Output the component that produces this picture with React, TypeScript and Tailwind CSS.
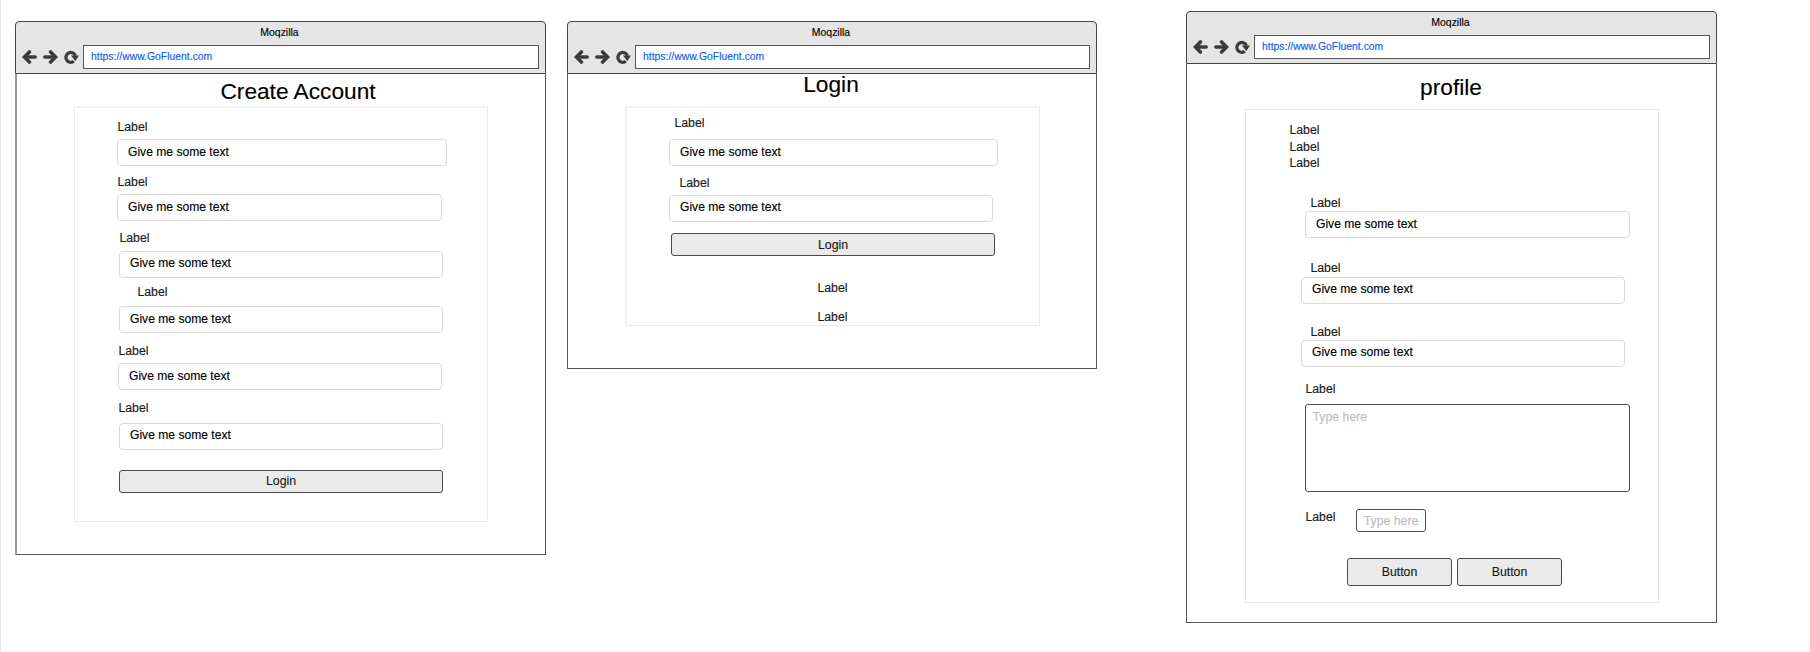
import type { ReactNode } from "react";

function ArrowIcon({ className = "" }: { className?: string }) {
  return (
    <svg viewBox="0 0 15 14" className={`h-[14px] w-[15px] ${className}`} fill="none" stroke="#3b3b3b" strokeWidth="3.5" strokeLinecap="round">
      <path d="M3 7H13.2" />
      <path d="M7.4 1.9L2.4 7l5 5.1" strokeLinejoin="miter" />
    </svg>
  );
}

function ReloadIcon() {
  return (
    <svg viewBox="0 0 15 14" className="h-[14px] w-[15px]">
      <path d="M9.9 11.2A4.9 4.9 0 1 1 11.4 5.6" fill="none" stroke="#3b3b3b" strokeWidth="3.2" />
      <path d="M6.9 5.6L15 5.6L11.4 10.9Z" fill="#3b3b3b" />
    </svg>
  );
}

function BrowserWindow({ className, bodyClass = "border-l", children }: { className: string; bodyClass?: string; children: ReactNode }) {
  return (
    <section className={`flex shrink-0 flex-col ${className}`}>
      <header className="flex h-[53px] shrink-0 flex-col rounded-t-[4px] border border-[#444] bg-[#e5e5e5]">
        <div className="h-[23px] pr-[2px] text-center text-[10.45px] leading-[22px] text-black">Moqzilla</div>
        <div className="flex h-[24px] pl-[6px] pr-[6px]">
          <div className="flex w-[61px] items-center gap-[6px]">
            <ArrowIcon />
            <ArrowIcon className="rotate-180" />
            <ReloadIcon />
          </div>
          <div className="flex-1 border border-[#555] bg-white pl-[7px] text-[10.4px] leading-[21px] text-[#1160e6]">https://www.GoFluent.com</div>
        </div>
      </header>
      <div className={`flex-1 border-r border-b border-[#555] ${bodyClass}`}>{children}</div>
    </section>
  );
}

function Heading({ className = "", children }: { className?: string; children: ReactNode }) {
  return <h1 className={`h-[20px] text-center text-[22.7px] leading-[20px] text-black ${className}`}>{children}</h1>;
}

function Label({ className, children = "Label" }: { className: string; children?: ReactNode }) {
  return <div className={`h-[14px] pl-[0.4px] text-[12.3px] leading-[14px] text-[#1a1a1a] ${className}`}>{children}</div>;
}

function Field({ className, text = "leading-[25px]" }: { className: string; text?: string }) {
  return (
    <div className={`h-[27px] rounded-[4px] border border-[#d9d9d9] pl-[10px] text-[12.1px] text-black ${text} ${className}`}>
      Give me some text
    </div>
  );
}

function Button({ className, children }: { className: string; children: ReactNode }) {
  return (
    <button className={`block rounded-[3px] border border-[#4a4a4a] bg-[#eaeaea] text-center text-[12.3px] text-[#1a1a1a] ${className}`}>
      {children}
    </button>
  );
}

export default function App() {
  return (
    <main className="flex h-[652px] w-[1810px] items-start overflow-hidden border-l border-[#e2e2e2] bg-white font-['Liberation_Sans',Arial,sans-serif] [-webkit-text-stroke:0.15px]">
      <BrowserWindow className="mt-[21px] ml-[14px] h-[534px] w-[531px]" bodyClass="border-l-2 border-l-[#999]">
        <Heading className="mt-[7px] pl-[34px]">Create Account</Heading>
        <div className="mt-[5px] ml-[57px] h-[416px] w-[414px] border border-t-2 border-[#ebebeb] border-t-[#f3f3f3]">
          <Label className="mt-[12px] ml-[42px]" />
          <Field className="mt-[5px] ml-[42px] w-[330px]" />
          <Label className="mt-[9px] ml-[42px]" />
          <Field className="mt-[5px] ml-[42px] w-[325px]" />
          <Label className="mt-[10px] ml-[44px]" />
          <Field className="mt-[6px] ml-[44px] w-[324px]" text="leading-[23px]" />
          <Label className="mt-[7px] ml-[62px]" />
          <Field className="mt-[7px] ml-[44px] w-[324px]" />
          <Label className="mt-[11px] ml-[43px]" />
          <Field className="mt-[5px] ml-[43px] w-[324px]" />
          <Label className="mt-[11px] ml-[43px]" />
          <Field className="mt-[8px] ml-[44px] w-[324px]" text="leading-[23px]" />
          <Button className="mt-[20px] ml-[44px] h-[23px] w-[324px] leading-[21px]">Login</Button>
        </div>
      </BrowserWindow>

      <BrowserWindow className="mt-[21px] ml-[21px] h-[348px] w-[530px]">
        <Heading className="-ml-[2px]">Login</Heading>
        <div className="mt-[12px] ml-[57px] h-[220px] w-[415px] border border-t-2 border-l-2 border-[#ebebeb] border-t-[#f3f3f3] border-l-[#f3f3f3]">
          <Label className="mt-[8px] ml-[47px]" />
          <Field className="mt-[9px] ml-[42px] w-[329px]" />
          <Label className="mt-[10px] ml-[52px]" />
          <Field className="mt-[5px] ml-[42px] w-[324px]" text="leading-[23px]" />
          <Button className="mt-[11px] ml-[44px] h-[23px] w-[324px] leading-[22px]">Login</Button>
          <Label className="mt-[25px] ml-[190px]" />
          <Label className="mt-[15px] ml-[190px]" />
        </div>
      </BrowserWindow>

      <BrowserWindow className="mt-[11px] ml-[89px] h-[612px] w-[531px]">
        <Heading className="mt-[13px] -ml-[1px]">profile</Heading>
        <div className="mt-[12px] ml-[58px] h-[494px] w-[414px] border border-[#e6e6e6]">
          <Label className="mt-[13px] ml-[43px]" />
          <Label className="mt-[3px] ml-[43px]" />
          <Label className="mt-[2px] ml-[43px]" />
          <Label className="mt-[26px] ml-[64px]" />
          <Field className="mt-[1px] ml-[59px] w-[325px]" />
          <Label className="mt-[23px] ml-[64px]" />
          <Field className="mt-[2px] ml-[55px] w-[324px]" text="leading-[23px]" />
          <Label className="mt-[21px] ml-[64px]" />
          <Field className="mt-[1px] ml-[55px] w-[324px]" text="leading-[23px]" />
          <Label className="mt-[15px] ml-[59px]" />
          <div className="mt-[8px] ml-[59px] h-[88px] w-[325px] rounded-[3px] border border-[#4a4a4a] pt-[5px] pl-[6.5px] text-[12.3px] leading-[14px] text-[#bdbdbd]">Type here</div>
          <div className="mt-[17px] ml-[59px] flex h-[23px]">
            <Label className="mt-[1px] w-[51px]" />
            <div className="w-[70px] rounded-[3px] border border-[#4a4a4a] text-center text-[12.3px] leading-[23px] text-[#bdbdbd]">Type here</div>
          </div>
          <div className="mt-[26px] ml-[101px] flex gap-[5px]">
            <Button className="h-[28px] w-[105px] leading-[24px]">Button</Button>
            <Button className="h-[28px] w-[105px] leading-[24px]">Button</Button>
          </div>
        </div>
      </BrowserWindow>
    </main>
  );
}
